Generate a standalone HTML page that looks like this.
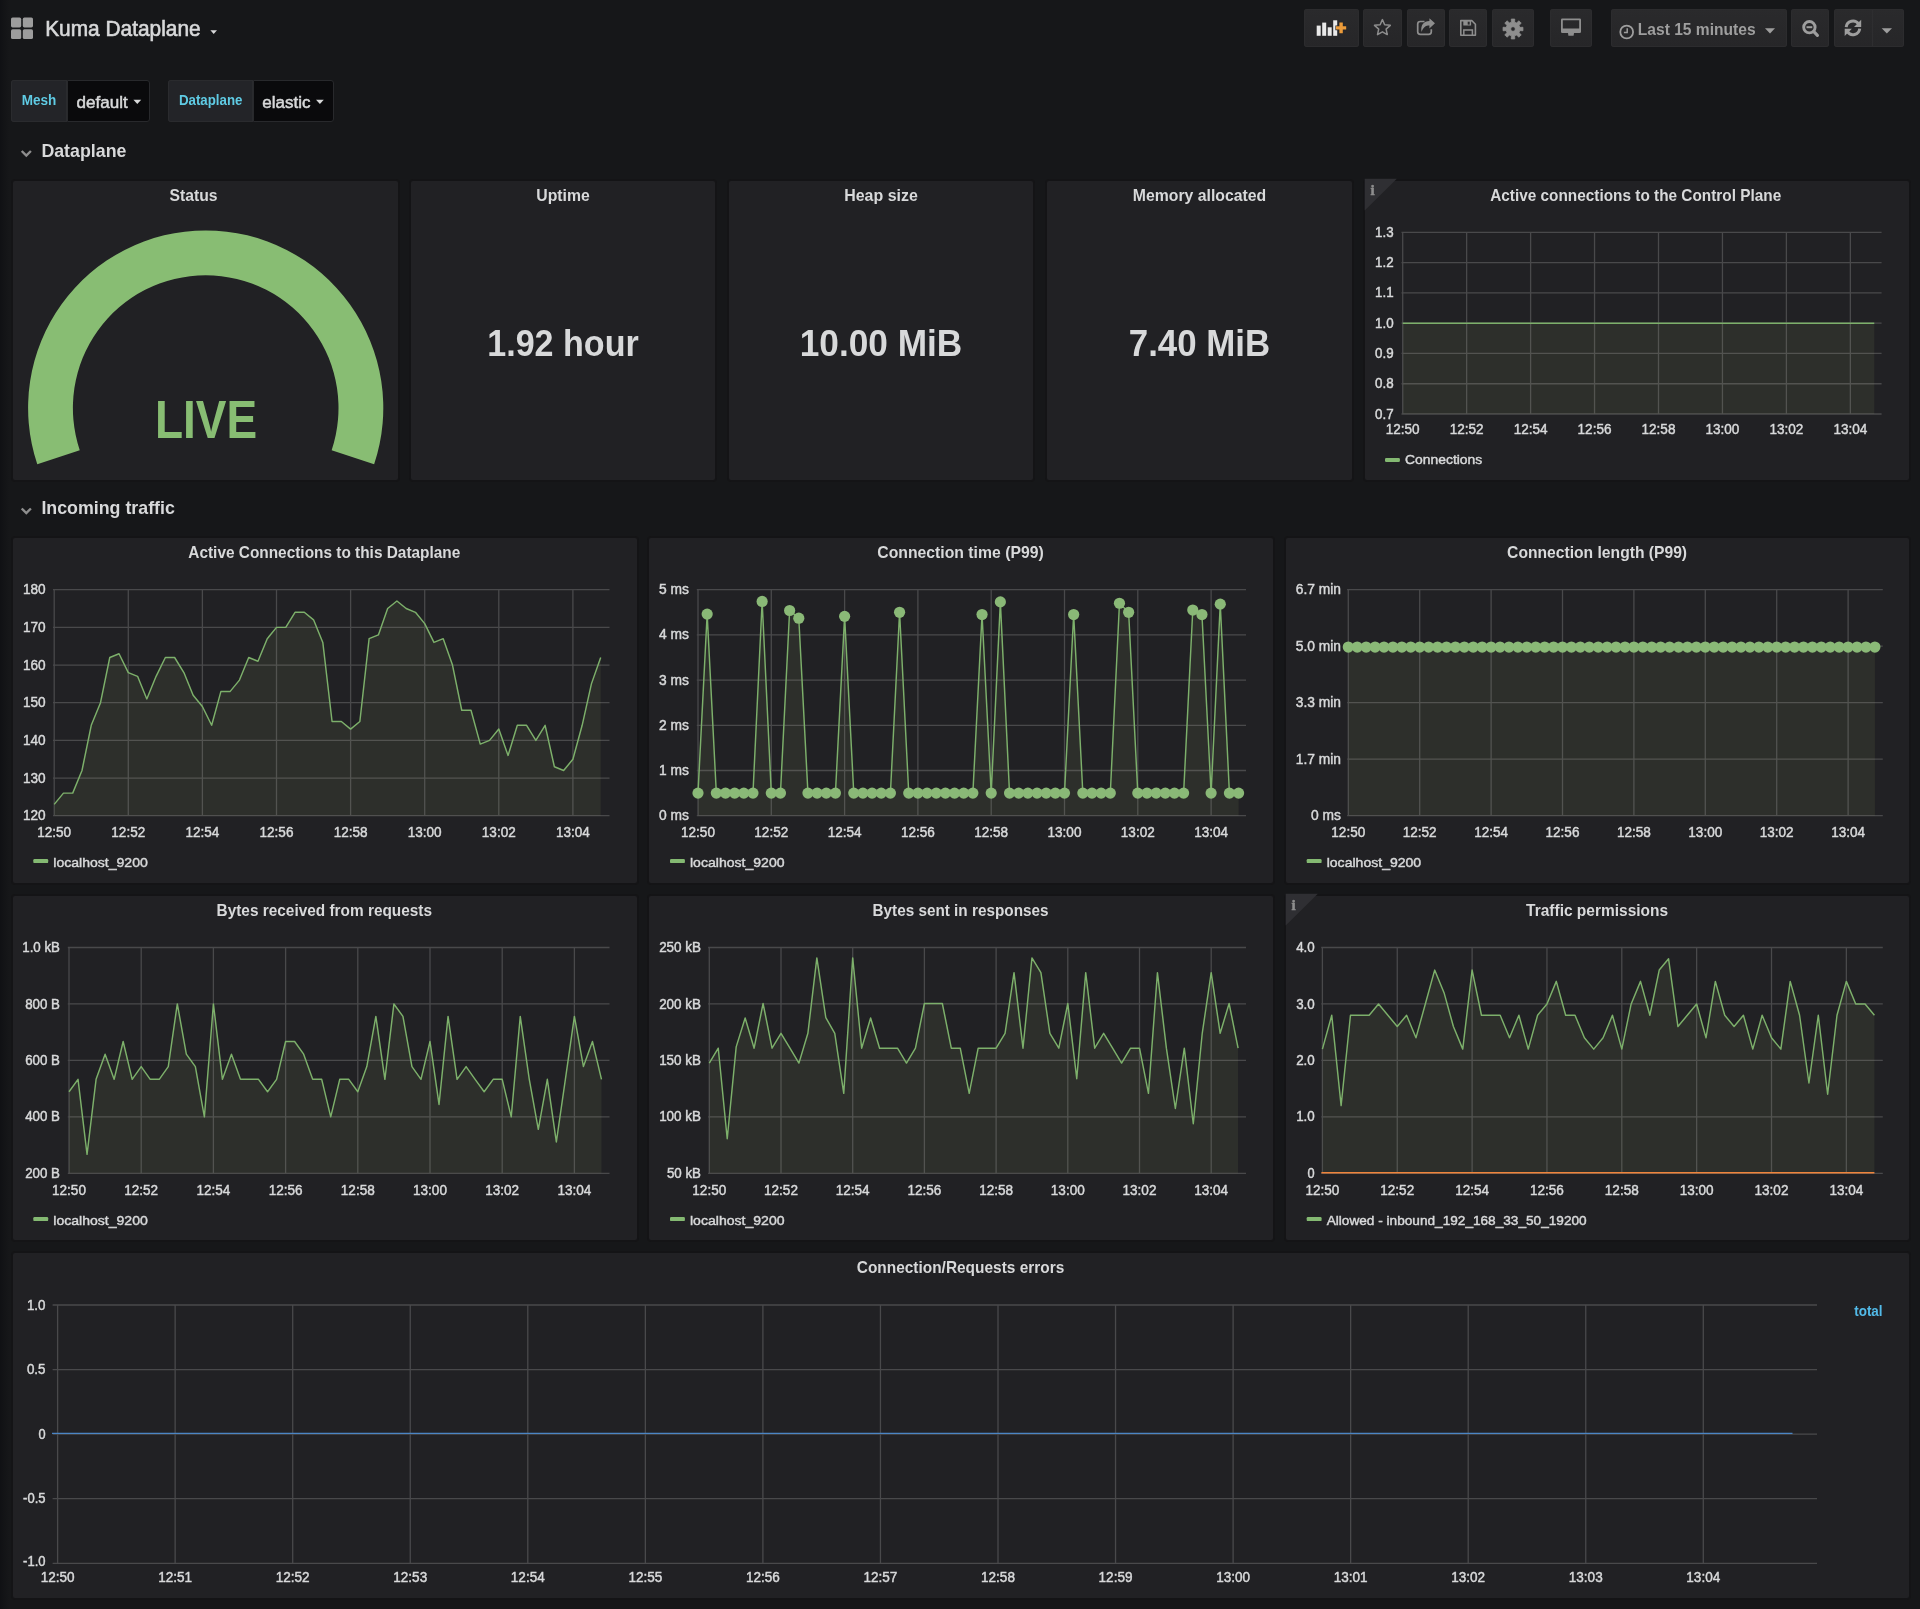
<!DOCTYPE html>
<html lang="en"><head><meta charset="utf-8"><title>Kuma Dataplane - Grafana</title>
<style>
html,body{margin:0;padding:0;background:#161719;}
body{width:1920px;height:1609px;position:relative;overflow:hidden;font-family:"Liberation Sans",sans-serif;color:#d8d9da;}
svg{display:block;will-change:transform;font-family:"Liberation Sans",sans-serif;}
svg{fill:#d8d9da;}
.abs{position:absolute;}
.panel{position:absolute;background:#212124;box-shadow:0 0 0 2px #141416;border-radius:2px;overflow:hidden;}
.btn{position:absolute;top:9px;height:38px;border-radius:3px;background:linear-gradient(#2a2a2c,#262628);box-shadow:inset 0 0 0 1px #2c2c2e;}
.var{position:absolute;top:80px;height:42px;box-sizing:border-box;}
.var.l{background:#232428;border-radius:3px 0 0 3px;box-shadow:inset 0 0 0 1px #2a2b2e;}
.var.v{background:#0a0a0c;border:1px solid #28292c;border-radius:0 3px 3px 0;}
#overlay{position:absolute;left:0;top:0;}
.edge{position:absolute;left:0;top:0;width:9px;height:1609px;background:linear-gradient(90deg,#101114,#161719);}
</style></head><body>
<div class="edge"></div>
<div class="navbar"><div class="btn" style="left:1303.5px;width:55px"></div><div class="btn" style="left:1363px;width:39.3px"></div><div class="btn" style="left:1407px;width:37.7px"></div><div class="btn" style="left:1449.3px;width:37.7px"></div><div class="btn" style="left:1492px;width:42.2px"></div><div class="btn" style="left:1550px;width:42px"></div><div class="btn" style="left:1611.2px;width:175.5px"></div><div class="btn" style="left:1791.3px;width:37.6px"></div><div class="btn" style="left:1834px;width:70.2px"></div></div>
<div class="var l" style="left:11.3px;width:55.5px"></div><div class="var v" style="left:66.5px;width:83px"></div><div class="var l" style="left:168.3px;width:85px"></div><div class="var v" style="left:253px;width:80.5px"></div>
<svg id="overlay" width="1920" height="540" viewBox="0 0 1920 540"><rect x="11" y="17.6" width="10.2" height="9.8" rx="1.6" fill="#9d9d9d"/><rect x="22.8" y="17.6" width="10.2" height="9.8" rx="1.6" fill="#9d9d9d"/><rect x="11" y="29.2" width="10.2" height="9.8" rx="1.6" fill="#9d9d9d"/><rect x="22.8" y="29.2" width="10.2" height="9.8" rx="1.6" fill="#9d9d9d"/><text x="45.20" y="35.60" font-size="21.2" textLength="155.50" lengthAdjust="spacingAndGlyphs" stroke="#d8d9da" stroke-width="0.6">Kuma Dataplane</text><path d="M210.4 30.2h6.6l-3.3 3.7z" fill="#d8d9da"/><g fill="#e9e9e9"><rect x="1316.7" y="25.6" width="4" height="10.2"/><rect x="1322.2" y="22.6" width="4" height="13.2"/><rect x="1327.7" y="27.3" width="4" height="8.5"/><rect x="1333.2" y="20.3" width="4" height="15.5"/></g><path d="M1336 26.2h3.4v-3.6h3.4v3.6h3.4v3.4h-3.4v3.6h-3.4v-3.6h-3.4z" fill="#eb9b3a" stroke="#262628" stroke-width="1.2" paint-order="stroke"/><path d="M1382.40 19.60L1384.69 24.74L1390.29 25.34L1386.11 29.11L1387.28 34.61L1382.40 31.80L1377.52 34.61L1378.69 29.11L1374.51 25.34L1380.11 24.74z" fill="none" stroke="#8e8e8e" stroke-width="1.5" stroke-linejoin="round"/><path d="M1424.5 21.5h-4.2a2.6 2.6 0 0 0 -2.6 2.6v7.6a2.6 2.6 0 0 0 2.6 2.6h8.4a2.6 2.6 0 0 0 2.6 -2.6v-2.4" fill="none" stroke="#8e8e8e" stroke-width="1.7"/><path d="M1429.4 18.2L1435 23.3L1429.4 28.4V25.500C1425.600 25.500 1423.300 27.400 1421.500 32C1420.300 25.400 1423.600 21.300 1429.400 21.100Z" fill="#8e8e8e" stroke="#262628" stroke-width="1" paint-order="stroke"/><path d="M1460.8 20.6h11l3.600 3.600v11h-14.600z" fill="none" stroke="#8e8e8e" stroke-width="1.6" stroke-linejoin="round"/><path d="M1463.300 20.600h7.800v4.900h-7.800z" fill="#8e8e8e"/><path d="M1467.700 21.700h2v2.900h-2z" fill="#29292b"/><path d="M1463.800 35v-5h8.600v5" fill="none" stroke="#8e8e8e" stroke-width="1.500"/><path d="M1522.95 27.26L1522.95 30.74L1519.81 30.63L1518.97 32.66L1521.26 34.81L1518.81 37.26L1516.66 34.97L1514.63 35.81L1514.74 38.95L1511.26 38.95L1511.37 35.81L1509.34 34.97L1507.19 37.26L1504.74 34.81L1507.03 32.66L1506.19 30.63L1503.05 30.74L1503.05 27.26L1506.19 27.37L1507.03 25.34L1504.74 23.19L1507.19 20.74L1509.34 23.03L1511.37 22.19L1511.26 19.05L1514.74 19.05L1514.63 22.19L1516.66 23.03L1518.81 20.74L1521.26 23.19L1518.97 25.34L1519.81 27.37zM1515.3 29a2.3 2.3 0 1 0 -4.6 0a2.3 2.3 0 1 0 4.6 0z" fill="#8e8e8e" fill-rule="evenodd" stroke="#8e8e8e" stroke-width="0.8" stroke-linejoin="round"/><path d="M1562.3 18.400h17.400a1.300 1.300 0 0 1 1.300 1.300v12.100a1.300 1.300 0 0 1 -1.300 1.300h-17.400a1.300 1.300 0 0 1 -1.300 -1.300v-12.100a1.300 1.300 0 0 1 1.300 -1.300zM1562.800 20.300v8.200h16.400v-8.200z" fill="#8e8e8e" fill-rule="evenodd"/><path d="M1568 33h6l-.4 2.700h-5.200z" fill="#8e8e8e"/><circle cx="1626.700" cy="32" r="6.400" fill="none" stroke="#9e9e9e" stroke-width="1.800"/><path d="M1627.200 28.200v4.300h-3.300" fill="none" stroke="#9e9e9e" stroke-width="1.500"/><text x="1637.80" y="34.60" font-size="16" textLength="117.80" lengthAdjust="spacingAndGlyphs" fill="#9e9e9e" font-weight="700">Last 15 minutes</text><path d="M1765 28.200h10l-5 5.300z" fill="#9e9e9e"/><circle cx="1809.400" cy="27.200" r="5.700" fill="none" stroke="#9e9e9e" stroke-width="2.900"/><path d="M1813.800 31.700l3.600 3.600" stroke="#9e9e9e" stroke-width="3.200" stroke-linecap="round"/><path d="M1806.500 27.200h5.800" stroke="#9e9e9e" stroke-width="2"/><path d="M1846.200 27.050A6.750 6.750 0 0 1 1858.500 24" fill="none" stroke="#9e9e9e" stroke-width="3"/><path d="M1861.200 19.700v7.200h-7.200z" fill="#9e9e9e"/><path d="M1859.700 28.650A6.750 6.750 0 0 1 1847.400 31.700" fill="none" stroke="#9e9e9e" stroke-width="3"/><path d="M1844.700 36v-7.200h7.200z" fill="#9e9e9e"/><path d="M1872.500 10v36" stroke="#2e2e30" stroke-width="1"/><path d="M1881.700 28.200h10.300l-5.150 5.300z" fill="#9e9e9e"/><text x="21.80" y="104.70" font-size="13.8" textLength="34.60" lengthAdjust="spacingAndGlyphs" fill="#5fcbe4" font-weight="700">Mesh</text><text x="76.60" y="108.00" font-size="16.3" textLength="51.20" lengthAdjust="spacingAndGlyphs" stroke="#d8d9da" stroke-width="0.5">default</text><path d="M133.400 99.700h7.800l-3.900 4.400z" fill="#d8d9da"/><text x="178.90" y="104.70" font-size="13.8" textLength="63.60" lengthAdjust="spacingAndGlyphs" fill="#5fcbe4" font-weight="700">Dataplane</text><text x="262.30" y="108.00" font-size="16.3" textLength="48.20" lengthAdjust="spacingAndGlyphs" stroke="#d8d9da" stroke-width="0.5">elastic</text><path d="M316 99.700h7.800l-3.900 4.400z" fill="#d8d9da"/><path d="M21.700 151.0l4.600 4.600l4.600 -4.600" fill="none" stroke="#8e8e8e" stroke-width="2.400"/><text x="41.40" y="156.80" font-size="18.4" textLength="85.00" lengthAdjust="spacingAndGlyphs" font-weight="700">Dataplane</text><path d="M21.700 508.49999999999994l4.600 4.600l4.600 -4.600" fill="none" stroke="#8e8e8e" stroke-width="2.400"/><text x="41.40" y="514.30" font-size="18.4" textLength="133.50" lengthAdjust="spacingAndGlyphs" font-weight="700">Incoming traffic</text></svg>
<div class="panel" style="left:13px;top:181px;width:385px;height:299px"><svg width="385" height="299" viewBox="13 181 385 299"><text x="193.50" y="201.00" font-size="15.9" text-anchor="middle" textLength="48.00" lengthAdjust="spacingAndGlyphs" font-weight="700">Status</text><path d="M37.28 464.35A177.6 177.6 0 1 1 374.12 464.35L331.64 450.14A132.8 132.8 0 1 0 79.76 450.14z" fill="#88bd73"/><text x="206.00" y="438.00" font-size="53.5" text-anchor="middle" textLength="102.20" lengthAdjust="spacingAndGlyphs" fill="#88bd73" font-weight="700">LIVE</text></svg></div>
<div class="panel" style="left:411px;top:181px;width:304px;height:299px"><svg width="304" height="299" viewBox="411 181 304 299"><text x="563.00" y="200.70" font-size="15.9" text-anchor="middle" textLength="53.50" lengthAdjust="spacingAndGlyphs" font-weight="700">Uptime</text><text x="563.00" y="355.50" font-size="37.6" text-anchor="middle" textLength="151.50" lengthAdjust="spacingAndGlyphs" font-weight="700">1.92 hour</text></svg></div>
<div class="panel" style="left:729px;top:181px;width:304px;height:299px"><svg width="304" height="299" viewBox="729 181 304 299"><text x="881.00" y="200.70" font-size="15.9" text-anchor="middle" textLength="73.50" lengthAdjust="spacingAndGlyphs" font-weight="700">Heap size</text><text x="881.00" y="355.50" font-size="37.6" text-anchor="middle" textLength="162.50" lengthAdjust="spacingAndGlyphs" font-weight="700">10.00 MiB</text></svg></div>
<div class="panel" style="left:1047px;top:181px;width:305px;height:299px"><svg width="305" height="299" viewBox="1047 181 305 299"><text x="1199.50" y="200.70" font-size="15.9" text-anchor="middle" textLength="133.50" lengthAdjust="spacingAndGlyphs" font-weight="700">Memory allocated</text><text x="1199.50" y="355.50" font-size="37.6" text-anchor="middle" textLength="141.50" lengthAdjust="spacingAndGlyphs" font-weight="700">7.40 MiB</text></svg></div>
<div class="panel" style="left:1365px;top:181px;width:544px;height:299px"><svg width="544" height="299" viewBox="1365 181 544 299"><text x="1635.70" y="200.70" font-size="15.9" text-anchor="middle" textLength="291.00" lengthAdjust="spacingAndGlyphs" font-weight="700">Active connections to the Control Plane</text><path d="M1402.70 323.20 L1410.69 323.20 L1418.68 323.20 L1426.68 323.20 L1434.67 323.20 L1442.66 323.20 L1450.65 323.20 L1458.65 323.20 L1466.64 323.20 L1474.63 323.20 L1482.62 323.20 L1490.62 323.20 L1498.61 323.20 L1506.60 323.20 L1514.60 323.20 L1522.59 323.20 L1530.58 323.20 L1538.57 323.20 L1546.57 323.20 L1554.56 323.20 L1562.55 323.20 L1570.54 323.20 L1578.54 323.20 L1586.53 323.20 L1594.52 323.20 L1602.51 323.20 L1610.51 323.20 L1618.50 323.20 L1626.49 323.20 L1634.48 323.20 L1642.47 323.20 L1650.47 323.20 L1658.46 323.20 L1666.45 323.20 L1674.45 323.20 L1682.44 323.20 L1690.43 323.20 L1698.42 323.20 L1706.41 323.20 L1714.41 323.20 L1722.40 323.20 L1730.39 323.20 L1738.38 323.20 L1746.38 323.20 L1754.37 323.20 L1762.36 323.20 L1770.36 323.20 L1778.35 323.20 L1786.34 323.20 L1794.33 323.20 L1802.33 323.20 L1810.32 323.20 L1818.31 323.20 L1826.30 323.20 L1834.30 323.20 L1842.29 323.20 L1850.28 323.20 L1858.27 323.20 L1866.27 323.20 L1874.26 323.20 L1874.26 414.00 L1402.70 414.00z" fill="#99ad6a" fill-opacity="0.1"/><path d="M1401.50 232.40H1881.60M1401.50 262.67H1881.60M1401.50 292.93H1881.60M1401.50 323.20H1881.60M1401.50 353.47H1881.60M1401.50 383.73H1881.60M1401.50 414.00H1881.60M1402.70 231.90V414.50M1466.65 231.90V414.50M1530.60 231.90V414.50M1594.55 231.90V414.50M1658.50 231.90V414.50M1722.45 231.90V414.50M1786.40 231.90V414.50M1850.35 231.90V414.50" stroke="#c8c8c8" stroke-opacity="0.24" stroke-width="1.3" fill="none"/><path d="M1402.70 323.20 L1410.69 323.20 L1418.68 323.20 L1426.68 323.20 L1434.67 323.20 L1442.66 323.20 L1450.65 323.20 L1458.65 323.20 L1466.64 323.20 L1474.63 323.20 L1482.62 323.20 L1490.62 323.20 L1498.61 323.20 L1506.60 323.20 L1514.60 323.20 L1522.59 323.20 L1530.58 323.20 L1538.57 323.20 L1546.57 323.20 L1554.56 323.20 L1562.55 323.20 L1570.54 323.20 L1578.54 323.20 L1586.53 323.20 L1594.52 323.20 L1602.51 323.20 L1610.51 323.20 L1618.50 323.20 L1626.49 323.20 L1634.48 323.20 L1642.47 323.20 L1650.47 323.20 L1658.46 323.20 L1666.45 323.20 L1674.45 323.20 L1682.44 323.20 L1690.43 323.20 L1698.42 323.20 L1706.41 323.20 L1714.41 323.20 L1722.40 323.20 L1730.39 323.20 L1738.38 323.20 L1746.38 323.20 L1754.37 323.20 L1762.36 323.20 L1770.36 323.20 L1778.35 323.20 L1786.34 323.20 L1794.33 323.20 L1802.33 323.20 L1810.32 323.20 L1818.31 323.20 L1826.30 323.20 L1834.30 323.20 L1842.29 323.20 L1850.28 323.20 L1858.27 323.20 L1866.27 323.20 L1874.26 323.20" stroke="#7db06b" stroke-width="1.45" fill="none" stroke-linejoin="round"/><text x="1393.60" y="236.95" font-size="13.8" text-anchor="end" textLength="18.57" lengthAdjust="spacingAndGlyphs" stroke="#d8d9da" stroke-width="0.45">1.3</text><text x="1393.60" y="267.22" font-size="13.8" text-anchor="end" textLength="18.57" lengthAdjust="spacingAndGlyphs" stroke="#d8d9da" stroke-width="0.45">1.2</text><text x="1393.60" y="297.48" font-size="13.8" text-anchor="end" textLength="18.57" lengthAdjust="spacingAndGlyphs" stroke="#d8d9da" stroke-width="0.45">1.1</text><text x="1393.60" y="327.75" font-size="13.8" text-anchor="end" textLength="18.57" lengthAdjust="spacingAndGlyphs" stroke="#d8d9da" stroke-width="0.45">1.0</text><text x="1393.60" y="358.02" font-size="13.8" text-anchor="end" textLength="18.57" lengthAdjust="spacingAndGlyphs" stroke="#d8d9da" stroke-width="0.45">0.9</text><text x="1393.60" y="388.28" font-size="13.8" text-anchor="end" textLength="18.57" lengthAdjust="spacingAndGlyphs" stroke="#d8d9da" stroke-width="0.45">0.8</text><text x="1393.60" y="418.55" font-size="13.8" text-anchor="end" textLength="18.57" lengthAdjust="spacingAndGlyphs" stroke="#d8d9da" stroke-width="0.45">0.7</text><text x="1402.70" y="433.85" font-size="13.8" text-anchor="middle" textLength="33.89" lengthAdjust="spacingAndGlyphs" stroke="#d8d9da" stroke-width="0.45">12:50</text><text x="1466.65" y="433.85" font-size="13.8" text-anchor="middle" textLength="33.89" lengthAdjust="spacingAndGlyphs" stroke="#d8d9da" stroke-width="0.45">12:52</text><text x="1530.60" y="433.85" font-size="13.8" text-anchor="middle" textLength="33.89" lengthAdjust="spacingAndGlyphs" stroke="#d8d9da" stroke-width="0.45">12:54</text><text x="1594.55" y="433.85" font-size="13.8" text-anchor="middle" textLength="33.89" lengthAdjust="spacingAndGlyphs" stroke="#d8d9da" stroke-width="0.45">12:56</text><text x="1658.50" y="433.85" font-size="13.8" text-anchor="middle" textLength="33.89" lengthAdjust="spacingAndGlyphs" stroke="#d8d9da" stroke-width="0.45">12:58</text><text x="1722.45" y="433.85" font-size="13.8" text-anchor="middle" textLength="33.89" lengthAdjust="spacingAndGlyphs" stroke="#d8d9da" stroke-width="0.45">13:00</text><text x="1786.40" y="433.85" font-size="13.8" text-anchor="middle" textLength="33.89" lengthAdjust="spacingAndGlyphs" stroke="#d8d9da" stroke-width="0.45">13:02</text><text x="1850.35" y="433.85" font-size="13.8" text-anchor="middle" textLength="33.89" lengthAdjust="spacingAndGlyphs" stroke="#d8d9da" stroke-width="0.45">13:04</text><rect x="1385.00" y="458.00" width="14.9" height="4" rx="1.2" fill="#84b972"/><text x="1405.00" y="463.60" font-size="13.6" textLength="77.30" lengthAdjust="spacingAndGlyphs" stroke="#d8d9da" stroke-width="0.45">Connections</text></svg></div>
<div class="panel" style="left:13px;top:538px;width:624px;height:345px"><svg width="624" height="345" viewBox="13 538 624 345"><text x="324.30" y="557.80" font-size="15.9" text-anchor="middle" textLength="272.00" lengthAdjust="spacingAndGlyphs" font-weight="700">Active Connections to this Dataplane</text><path d="M54.20 804.40 L63.46 793.10 L72.72 793.10 L81.99 770.50 L91.25 725.30 L100.51 702.70 L109.78 657.50 L119.04 653.73 L128.30 672.57 L137.56 676.33 L146.82 698.93 L156.09 676.33 L165.35 657.50 L174.61 657.50 L183.88 672.57 L193.14 695.17 L202.40 706.47 L211.66 725.30 L220.93 691.40 L230.19 691.40 L239.45 680.10 L248.71 657.50 L257.97 661.27 L267.24 638.67 L276.50 627.37 L285.76 627.37 L295.02 612.30 L304.29 612.30 L313.55 619.83 L322.81 642.43 L332.07 721.53 L341.34 721.53 L350.60 729.07 L359.86 721.53 L369.12 638.67 L378.39 634.90 L387.65 608.53 L396.91 601.00 L406.17 608.53 L415.44 612.30 L424.70 623.60 L433.96 642.43 L443.22 638.67 L452.49 665.03 L461.75 710.23 L471.01 710.23 L480.27 744.13 L489.54 740.37 L498.80 729.07 L508.06 755.43 L517.32 725.30 L526.59 725.30 L535.85 740.37 L545.11 725.30 L554.38 766.73 L563.64 770.50 L572.90 759.20 L582.16 725.30 L591.42 683.87 L600.69 657.50 L600.69 815.70 L54.20 815.70z" fill="#99ad6a" fill-opacity="0.1"/><path d="M53.00 589.70H609.50M53.00 627.37H609.50M53.00 665.03H609.50M53.00 702.70H609.50M53.00 740.37H609.50M53.00 778.03H609.50M53.00 815.70H609.50M54.20 589.20V816.20M128.30 589.20V816.20M202.40 589.20V816.20M276.50 589.20V816.20M350.60 589.20V816.20M424.70 589.20V816.20M498.80 589.20V816.20M572.90 589.20V816.20" stroke="#c8c8c8" stroke-opacity="0.24" stroke-width="1.3" fill="none"/><path d="M54.20 804.40 L63.46 793.10 L72.72 793.10 L81.99 770.50 L91.25 725.30 L100.51 702.70 L109.78 657.50 L119.04 653.73 L128.30 672.57 L137.56 676.33 L146.82 698.93 L156.09 676.33 L165.35 657.50 L174.61 657.50 L183.88 672.57 L193.14 695.17 L202.40 706.47 L211.66 725.30 L220.93 691.40 L230.19 691.40 L239.45 680.10 L248.71 657.50 L257.97 661.27 L267.24 638.67 L276.50 627.37 L285.76 627.37 L295.02 612.30 L304.29 612.30 L313.55 619.83 L322.81 642.43 L332.07 721.53 L341.34 721.53 L350.60 729.07 L359.86 721.53 L369.12 638.67 L378.39 634.90 L387.65 608.53 L396.91 601.00 L406.17 608.53 L415.44 612.30 L424.70 623.60 L433.96 642.43 L443.22 638.67 L452.49 665.03 L461.75 710.23 L471.01 710.23 L480.27 744.13 L489.54 740.37 L498.80 729.07 L508.06 755.43 L517.32 725.30 L526.59 725.30 L535.85 740.37 L545.11 725.30 L554.38 766.73 L563.64 770.50 L572.90 759.20 L582.16 725.30 L591.42 683.87 L600.69 657.50" stroke="#7db06b" stroke-width="1.45" fill="none" stroke-linejoin="round"/><text x="45.70" y="594.25" font-size="13.8" text-anchor="end" textLength="22.72" lengthAdjust="spacingAndGlyphs" stroke="#d8d9da" stroke-width="0.45">180</text><text x="45.70" y="631.92" font-size="13.8" text-anchor="end" textLength="22.72" lengthAdjust="spacingAndGlyphs" stroke="#d8d9da" stroke-width="0.45">170</text><text x="45.70" y="669.58" font-size="13.8" text-anchor="end" textLength="22.72" lengthAdjust="spacingAndGlyphs" stroke="#d8d9da" stroke-width="0.45">160</text><text x="45.70" y="707.25" font-size="13.8" text-anchor="end" textLength="22.72" lengthAdjust="spacingAndGlyphs" stroke="#d8d9da" stroke-width="0.45">150</text><text x="45.70" y="744.92" font-size="13.8" text-anchor="end" textLength="22.72" lengthAdjust="spacingAndGlyphs" stroke="#d8d9da" stroke-width="0.45">140</text><text x="45.70" y="782.58" font-size="13.8" text-anchor="end" textLength="22.72" lengthAdjust="spacingAndGlyphs" stroke="#d8d9da" stroke-width="0.45">130</text><text x="45.70" y="820.25" font-size="13.8" text-anchor="end" textLength="22.72" lengthAdjust="spacingAndGlyphs" stroke="#d8d9da" stroke-width="0.45">120</text><text x="54.20" y="836.55" font-size="13.8" text-anchor="middle" textLength="33.89" lengthAdjust="spacingAndGlyphs" stroke="#d8d9da" stroke-width="0.45">12:50</text><text x="128.30" y="836.55" font-size="13.8" text-anchor="middle" textLength="33.89" lengthAdjust="spacingAndGlyphs" stroke="#d8d9da" stroke-width="0.45">12:52</text><text x="202.40" y="836.55" font-size="13.8" text-anchor="middle" textLength="33.89" lengthAdjust="spacingAndGlyphs" stroke="#d8d9da" stroke-width="0.45">12:54</text><text x="276.50" y="836.55" font-size="13.8" text-anchor="middle" textLength="33.89" lengthAdjust="spacingAndGlyphs" stroke="#d8d9da" stroke-width="0.45">12:56</text><text x="350.60" y="836.55" font-size="13.8" text-anchor="middle" textLength="33.89" lengthAdjust="spacingAndGlyphs" stroke="#d8d9da" stroke-width="0.45">12:58</text><text x="424.70" y="836.55" font-size="13.8" text-anchor="middle" textLength="33.89" lengthAdjust="spacingAndGlyphs" stroke="#d8d9da" stroke-width="0.45">13:00</text><text x="498.80" y="836.55" font-size="13.8" text-anchor="middle" textLength="33.89" lengthAdjust="spacingAndGlyphs" stroke="#d8d9da" stroke-width="0.45">13:02</text><text x="572.90" y="836.55" font-size="13.8" text-anchor="middle" textLength="33.89" lengthAdjust="spacingAndGlyphs" stroke="#d8d9da" stroke-width="0.45">13:04</text><rect x="33.30" y="859.10" width="14.9" height="4" rx="1.2" fill="#84b972"/><text x="53.30" y="866.60" font-size="13.6" textLength="94.50" lengthAdjust="spacingAndGlyphs" stroke="#d8d9da" stroke-width="0.45">localhost_9200</text></svg></div>
<div class="panel" style="left:649px;top:538px;width:624px;height:345px"><svg width="624" height="345" viewBox="649 538 624 345"><text x="960.50" y="557.80" font-size="15.9" text-anchor="middle" textLength="166.50" lengthAdjust="spacingAndGlyphs" font-weight="700">Connection time (P99)</text><path d="M698.00 793.10 L707.16 614.11 L716.33 793.10 L725.49 793.10 L734.65 793.10 L743.81 793.10 L752.98 793.10 L762.14 601.45 L771.30 793.10 L780.46 793.10 L789.62 610.49 L798.79 618.18 L807.95 793.10 L817.11 793.10 L826.27 793.10 L835.44 793.10 L844.60 616.37 L853.76 793.10 L862.92 793.10 L872.09 793.10 L881.25 793.10 L890.41 793.10 L899.58 612.30 L908.74 793.10 L917.90 793.10 L927.06 793.10 L936.23 793.10 L945.39 793.10 L954.55 793.10 L963.71 793.10 L972.88 793.10 L982.04 614.56 L991.20 793.10 L1000.36 601.90 L1009.52 793.10 L1018.69 793.10 L1027.85 793.10 L1037.01 793.10 L1046.17 793.10 L1055.34 793.10 L1064.50 793.10 L1073.66 614.56 L1082.83 793.10 L1091.99 793.10 L1101.15 793.10 L1110.31 793.10 L1119.47 603.26 L1128.64 612.30 L1137.80 793.10 L1146.96 793.10 L1156.12 793.10 L1165.29 793.10 L1174.45 793.10 L1183.61 793.10 L1192.78 610.04 L1201.94 614.56 L1211.10 793.10 L1220.26 604.16 L1229.42 793.10 L1238.59 793.10 L1238.59 815.70 L698.00 815.70z" fill="#99ad6a" fill-opacity="0.1"/><path d="M696.80 589.70H1246.00M696.80 634.90H1246.00M696.80 680.10H1246.00M696.80 725.30H1246.00M696.80 770.50H1246.00M696.80 815.70H1246.00M698.00 589.20V816.20M771.30 589.20V816.20M844.60 589.20V816.20M917.90 589.20V816.20M991.20 589.20V816.20M1064.50 589.20V816.20M1137.80 589.20V816.20M1211.10 589.20V816.20" stroke="#c8c8c8" stroke-opacity="0.24" stroke-width="1.3" fill="none"/><path d="M698.00 793.10 L707.16 614.11 L716.33 793.10 L725.49 793.10 L734.65 793.10 L743.81 793.10 L752.98 793.10 L762.14 601.45 L771.30 793.10 L780.46 793.10 L789.62 610.49 L798.79 618.18 L807.95 793.10 L817.11 793.10 L826.27 793.10 L835.44 793.10 L844.60 616.37 L853.76 793.10 L862.92 793.10 L872.09 793.10 L881.25 793.10 L890.41 793.10 L899.58 612.30 L908.74 793.10 L917.90 793.10 L927.06 793.10 L936.23 793.10 L945.39 793.10 L954.55 793.10 L963.71 793.10 L972.88 793.10 L982.04 614.56 L991.20 793.10 L1000.36 601.90 L1009.52 793.10 L1018.69 793.10 L1027.85 793.10 L1037.01 793.10 L1046.17 793.10 L1055.34 793.10 L1064.50 793.10 L1073.66 614.56 L1082.83 793.10 L1091.99 793.10 L1101.15 793.10 L1110.31 793.10 L1119.47 603.26 L1128.64 612.30 L1137.80 793.10 L1146.96 793.10 L1156.12 793.10 L1165.29 793.10 L1174.45 793.10 L1183.61 793.10 L1192.78 610.04 L1201.94 614.56 L1211.10 793.10 L1220.26 604.16 L1229.42 793.10 L1238.59 793.10" stroke="#7db06b" stroke-width="1.45" fill="none" stroke-linejoin="round"/><g fill="#8ab977"><circle cx="698.00" cy="793.10" r="5.6"/><circle cx="707.16" cy="614.11" r="5.6"/><circle cx="716.33" cy="793.10" r="5.6"/><circle cx="725.49" cy="793.10" r="5.6"/><circle cx="734.65" cy="793.10" r="5.6"/><circle cx="743.81" cy="793.10" r="5.6"/><circle cx="752.98" cy="793.10" r="5.6"/><circle cx="762.14" cy="601.45" r="5.6"/><circle cx="771.30" cy="793.10" r="5.6"/><circle cx="780.46" cy="793.10" r="5.6"/><circle cx="789.62" cy="610.49" r="5.6"/><circle cx="798.79" cy="618.18" r="5.6"/><circle cx="807.95" cy="793.10" r="5.6"/><circle cx="817.11" cy="793.10" r="5.6"/><circle cx="826.27" cy="793.10" r="5.6"/><circle cx="835.44" cy="793.10" r="5.6"/><circle cx="844.60" cy="616.37" r="5.6"/><circle cx="853.76" cy="793.10" r="5.6"/><circle cx="862.92" cy="793.10" r="5.6"/><circle cx="872.09" cy="793.10" r="5.6"/><circle cx="881.25" cy="793.10" r="5.6"/><circle cx="890.41" cy="793.10" r="5.6"/><circle cx="899.58" cy="612.30" r="5.6"/><circle cx="908.74" cy="793.10" r="5.6"/><circle cx="917.90" cy="793.10" r="5.6"/><circle cx="927.06" cy="793.10" r="5.6"/><circle cx="936.23" cy="793.10" r="5.6"/><circle cx="945.39" cy="793.10" r="5.6"/><circle cx="954.55" cy="793.10" r="5.6"/><circle cx="963.71" cy="793.10" r="5.6"/><circle cx="972.88" cy="793.10" r="5.6"/><circle cx="982.04" cy="614.56" r="5.6"/><circle cx="991.20" cy="793.10" r="5.6"/><circle cx="1000.36" cy="601.90" r="5.6"/><circle cx="1009.52" cy="793.10" r="5.6"/><circle cx="1018.69" cy="793.10" r="5.6"/><circle cx="1027.85" cy="793.10" r="5.6"/><circle cx="1037.01" cy="793.10" r="5.6"/><circle cx="1046.17" cy="793.10" r="5.6"/><circle cx="1055.34" cy="793.10" r="5.6"/><circle cx="1064.50" cy="793.10" r="5.6"/><circle cx="1073.66" cy="614.56" r="5.6"/><circle cx="1082.83" cy="793.10" r="5.6"/><circle cx="1091.99" cy="793.10" r="5.6"/><circle cx="1101.15" cy="793.10" r="5.6"/><circle cx="1110.31" cy="793.10" r="5.6"/><circle cx="1119.47" cy="603.26" r="5.6"/><circle cx="1128.64" cy="612.30" r="5.6"/><circle cx="1137.80" cy="793.10" r="5.6"/><circle cx="1146.96" cy="793.10" r="5.6"/><circle cx="1156.12" cy="793.10" r="5.6"/><circle cx="1165.29" cy="793.10" r="5.6"/><circle cx="1174.45" cy="793.10" r="5.6"/><circle cx="1183.61" cy="793.10" r="5.6"/><circle cx="1192.78" cy="610.04" r="5.6"/><circle cx="1201.94" cy="614.56" r="5.6"/><circle cx="1211.10" cy="793.10" r="5.6"/><circle cx="1220.26" cy="604.16" r="5.6"/><circle cx="1229.42" cy="793.10" r="5.6"/><circle cx="1238.59" cy="793.10" r="5.6"/></g><text x="689.00" y="594.25" font-size="13.8" text-anchor="end" textLength="29.90" lengthAdjust="spacingAndGlyphs" stroke="#d8d9da" stroke-width="0.45">5 ms</text><text x="689.00" y="639.45" font-size="13.8" text-anchor="end" textLength="29.90" lengthAdjust="spacingAndGlyphs" stroke="#d8d9da" stroke-width="0.45">4 ms</text><text x="689.00" y="684.65" font-size="13.8" text-anchor="end" textLength="29.90" lengthAdjust="spacingAndGlyphs" stroke="#d8d9da" stroke-width="0.45">3 ms</text><text x="689.00" y="729.85" font-size="13.8" text-anchor="end" textLength="29.90" lengthAdjust="spacingAndGlyphs" stroke="#d8d9da" stroke-width="0.45">2 ms</text><text x="689.00" y="775.05" font-size="13.8" text-anchor="end" textLength="29.90" lengthAdjust="spacingAndGlyphs" stroke="#d8d9da" stroke-width="0.45">1 ms</text><text x="689.00" y="820.25" font-size="13.8" text-anchor="end" textLength="29.90" lengthAdjust="spacingAndGlyphs" stroke="#d8d9da" stroke-width="0.45">0 ms</text><text x="698.00" y="836.55" font-size="13.8" text-anchor="middle" textLength="33.89" lengthAdjust="spacingAndGlyphs" stroke="#d8d9da" stroke-width="0.45">12:50</text><text x="771.30" y="836.55" font-size="13.8" text-anchor="middle" textLength="33.89" lengthAdjust="spacingAndGlyphs" stroke="#d8d9da" stroke-width="0.45">12:52</text><text x="844.60" y="836.55" font-size="13.8" text-anchor="middle" textLength="33.89" lengthAdjust="spacingAndGlyphs" stroke="#d8d9da" stroke-width="0.45">12:54</text><text x="917.90" y="836.55" font-size="13.8" text-anchor="middle" textLength="33.89" lengthAdjust="spacingAndGlyphs" stroke="#d8d9da" stroke-width="0.45">12:56</text><text x="991.20" y="836.55" font-size="13.8" text-anchor="middle" textLength="33.89" lengthAdjust="spacingAndGlyphs" stroke="#d8d9da" stroke-width="0.45">12:58</text><text x="1064.50" y="836.55" font-size="13.8" text-anchor="middle" textLength="33.89" lengthAdjust="spacingAndGlyphs" stroke="#d8d9da" stroke-width="0.45">13:00</text><text x="1137.80" y="836.55" font-size="13.8" text-anchor="middle" textLength="33.89" lengthAdjust="spacingAndGlyphs" stroke="#d8d9da" stroke-width="0.45">13:02</text><text x="1211.10" y="836.55" font-size="13.8" text-anchor="middle" textLength="33.89" lengthAdjust="spacingAndGlyphs" stroke="#d8d9da" stroke-width="0.45">13:04</text><rect x="670.00" y="859.10" width="14.9" height="4" rx="1.2" fill="#84b972"/><text x="690.00" y="866.60" font-size="13.6" textLength="94.50" lengthAdjust="spacingAndGlyphs" stroke="#d8d9da" stroke-width="0.45">localhost_9200</text></svg></div>
<div class="panel" style="left:1286px;top:538px;width:623px;height:345px"><svg width="623" height="345" viewBox="1286 538 623 345"><text x="1597.10" y="557.80" font-size="15.9" text-anchor="middle" textLength="180.00" lengthAdjust="spacingAndGlyphs" font-weight="700">Connection length (P99)</text><path d="M1348.30 647.05 L1357.22 647.05 L1366.15 647.05 L1375.08 647.05 L1384.00 647.05 L1392.92 647.05 L1401.85 647.05 L1410.77 647.05 L1419.70 647.05 L1428.62 647.05 L1437.55 647.05 L1446.47 647.05 L1455.40 647.05 L1464.33 647.05 L1473.25 647.05 L1482.17 647.05 L1491.10 647.05 L1500.03 647.05 L1508.95 647.05 L1517.88 647.05 L1526.80 647.05 L1535.72 647.05 L1544.65 647.05 L1553.58 647.05 L1562.50 647.05 L1571.42 647.05 L1580.35 647.05 L1589.28 647.05 L1598.20 647.05 L1607.12 647.05 L1616.05 647.05 L1624.97 647.05 L1633.90 647.05 L1642.83 647.05 L1651.75 647.05 L1660.67 647.05 L1669.60 647.05 L1678.53 647.05 L1687.45 647.05 L1696.38 647.05 L1705.30 647.05 L1714.22 647.05 L1723.15 647.05 L1732.08 647.05 L1741.00 647.05 L1749.92 647.05 L1758.85 647.05 L1767.78 647.05 L1776.70 647.05 L1785.62 647.05 L1794.55 647.05 L1803.47 647.05 L1812.40 647.05 L1821.33 647.05 L1830.25 647.05 L1839.17 647.05 L1848.10 647.05 L1857.03 647.05 L1865.95 647.05 L1874.88 647.05 L1874.88 815.70 L1348.30 815.70z" fill="#99ad6a" fill-opacity="0.1"/><path d="M1347.10 589.70H1882.80M1347.10 646.20H1882.80M1347.10 702.70H1882.80M1347.10 759.20H1882.80M1347.10 815.70H1882.80M1348.30 589.20V816.20M1419.70 589.20V816.20M1491.10 589.20V816.20M1562.50 589.20V816.20M1633.90 589.20V816.20M1705.30 589.20V816.20M1776.70 589.20V816.20M1848.10 589.20V816.20" stroke="#c8c8c8" stroke-opacity="0.24" stroke-width="1.3" fill="none"/><path d="M1348.30 647.05 L1357.22 647.05 L1366.15 647.05 L1375.08 647.05 L1384.00 647.05 L1392.92 647.05 L1401.85 647.05 L1410.77 647.05 L1419.70 647.05 L1428.62 647.05 L1437.55 647.05 L1446.47 647.05 L1455.40 647.05 L1464.33 647.05 L1473.25 647.05 L1482.17 647.05 L1491.10 647.05 L1500.03 647.05 L1508.95 647.05 L1517.88 647.05 L1526.80 647.05 L1535.72 647.05 L1544.65 647.05 L1553.58 647.05 L1562.50 647.05 L1571.42 647.05 L1580.35 647.05 L1589.28 647.05 L1598.20 647.05 L1607.12 647.05 L1616.05 647.05 L1624.97 647.05 L1633.90 647.05 L1642.83 647.05 L1651.75 647.05 L1660.67 647.05 L1669.60 647.05 L1678.53 647.05 L1687.45 647.05 L1696.38 647.05 L1705.30 647.05 L1714.22 647.05 L1723.15 647.05 L1732.08 647.05 L1741.00 647.05 L1749.92 647.05 L1758.85 647.05 L1767.78 647.05 L1776.70 647.05 L1785.62 647.05 L1794.55 647.05 L1803.47 647.05 L1812.40 647.05 L1821.33 647.05 L1830.25 647.05 L1839.17 647.05 L1848.10 647.05 L1857.03 647.05 L1865.95 647.05 L1874.88 647.05" stroke="#7db06b" stroke-width="1.45" fill="none" stroke-linejoin="round"/><g fill="#8ab977"><circle cx="1348.30" cy="647.05" r="5.6"/><circle cx="1357.22" cy="647.05" r="5.6"/><circle cx="1366.15" cy="647.05" r="5.6"/><circle cx="1375.08" cy="647.05" r="5.6"/><circle cx="1384.00" cy="647.05" r="5.6"/><circle cx="1392.92" cy="647.05" r="5.6"/><circle cx="1401.85" cy="647.05" r="5.6"/><circle cx="1410.77" cy="647.05" r="5.6"/><circle cx="1419.70" cy="647.05" r="5.6"/><circle cx="1428.62" cy="647.05" r="5.6"/><circle cx="1437.55" cy="647.05" r="5.6"/><circle cx="1446.47" cy="647.05" r="5.6"/><circle cx="1455.40" cy="647.05" r="5.6"/><circle cx="1464.33" cy="647.05" r="5.6"/><circle cx="1473.25" cy="647.05" r="5.6"/><circle cx="1482.17" cy="647.05" r="5.6"/><circle cx="1491.10" cy="647.05" r="5.6"/><circle cx="1500.03" cy="647.05" r="5.6"/><circle cx="1508.95" cy="647.05" r="5.6"/><circle cx="1517.88" cy="647.05" r="5.6"/><circle cx="1526.80" cy="647.05" r="5.6"/><circle cx="1535.72" cy="647.05" r="5.6"/><circle cx="1544.65" cy="647.05" r="5.6"/><circle cx="1553.58" cy="647.05" r="5.6"/><circle cx="1562.50" cy="647.05" r="5.6"/><circle cx="1571.42" cy="647.05" r="5.6"/><circle cx="1580.35" cy="647.05" r="5.6"/><circle cx="1589.28" cy="647.05" r="5.6"/><circle cx="1598.20" cy="647.05" r="5.6"/><circle cx="1607.12" cy="647.05" r="5.6"/><circle cx="1616.05" cy="647.05" r="5.6"/><circle cx="1624.97" cy="647.05" r="5.6"/><circle cx="1633.90" cy="647.05" r="5.6"/><circle cx="1642.83" cy="647.05" r="5.6"/><circle cx="1651.75" cy="647.05" r="5.6"/><circle cx="1660.67" cy="647.05" r="5.6"/><circle cx="1669.60" cy="647.05" r="5.6"/><circle cx="1678.53" cy="647.05" r="5.6"/><circle cx="1687.45" cy="647.05" r="5.6"/><circle cx="1696.38" cy="647.05" r="5.6"/><circle cx="1705.30" cy="647.05" r="5.6"/><circle cx="1714.22" cy="647.05" r="5.6"/><circle cx="1723.15" cy="647.05" r="5.6"/><circle cx="1732.08" cy="647.05" r="5.6"/><circle cx="1741.00" cy="647.05" r="5.6"/><circle cx="1749.92" cy="647.05" r="5.6"/><circle cx="1758.85" cy="647.05" r="5.6"/><circle cx="1767.78" cy="647.05" r="5.6"/><circle cx="1776.70" cy="647.05" r="5.6"/><circle cx="1785.62" cy="647.05" r="5.6"/><circle cx="1794.55" cy="647.05" r="5.6"/><circle cx="1803.47" cy="647.05" r="5.6"/><circle cx="1812.40" cy="647.05" r="5.6"/><circle cx="1821.33" cy="647.05" r="5.6"/><circle cx="1830.25" cy="647.05" r="5.6"/><circle cx="1839.17" cy="647.05" r="5.6"/><circle cx="1848.10" cy="647.05" r="5.6"/><circle cx="1857.03" cy="647.05" r="5.6"/><circle cx="1865.95" cy="647.05" r="5.6"/><circle cx="1874.88" cy="647.05" r="5.6"/></g><text x="1341.00" y="594.25" font-size="13.8" text-anchor="end" textLength="45.24" lengthAdjust="spacingAndGlyphs" stroke="#d8d9da" stroke-width="0.45">6.7 min</text><text x="1341.00" y="650.75" font-size="13.8" text-anchor="end" textLength="45.24" lengthAdjust="spacingAndGlyphs" stroke="#d8d9da" stroke-width="0.45">5.0 min</text><text x="1341.00" y="707.25" font-size="13.8" text-anchor="end" textLength="45.24" lengthAdjust="spacingAndGlyphs" stroke="#d8d9da" stroke-width="0.45">3.3 min</text><text x="1341.00" y="763.75" font-size="13.8" text-anchor="end" textLength="45.24" lengthAdjust="spacingAndGlyphs" stroke="#d8d9da" stroke-width="0.45">1.7 min</text><text x="1341.00" y="820.25" font-size="13.8" text-anchor="end" textLength="29.90" lengthAdjust="spacingAndGlyphs" stroke="#d8d9da" stroke-width="0.45">0 ms</text><text x="1348.30" y="836.55" font-size="13.8" text-anchor="middle" textLength="33.89" lengthAdjust="spacingAndGlyphs" stroke="#d8d9da" stroke-width="0.45">12:50</text><text x="1419.70" y="836.55" font-size="13.8" text-anchor="middle" textLength="33.89" lengthAdjust="spacingAndGlyphs" stroke="#d8d9da" stroke-width="0.45">12:52</text><text x="1491.10" y="836.55" font-size="13.8" text-anchor="middle" textLength="33.89" lengthAdjust="spacingAndGlyphs" stroke="#d8d9da" stroke-width="0.45">12:54</text><text x="1562.50" y="836.55" font-size="13.8" text-anchor="middle" textLength="33.89" lengthAdjust="spacingAndGlyphs" stroke="#d8d9da" stroke-width="0.45">12:56</text><text x="1633.90" y="836.55" font-size="13.8" text-anchor="middle" textLength="33.89" lengthAdjust="spacingAndGlyphs" stroke="#d8d9da" stroke-width="0.45">12:58</text><text x="1705.30" y="836.55" font-size="13.8" text-anchor="middle" textLength="33.89" lengthAdjust="spacingAndGlyphs" stroke="#d8d9da" stroke-width="0.45">13:00</text><text x="1776.70" y="836.55" font-size="13.8" text-anchor="middle" textLength="33.89" lengthAdjust="spacingAndGlyphs" stroke="#d8d9da" stroke-width="0.45">13:02</text><text x="1848.10" y="836.55" font-size="13.8" text-anchor="middle" textLength="33.89" lengthAdjust="spacingAndGlyphs" stroke="#d8d9da" stroke-width="0.45">13:04</text><rect x="1306.70" y="859.10" width="14.9" height="4" rx="1.2" fill="#84b972"/><text x="1326.70" y="866.60" font-size="13.6" textLength="94.50" lengthAdjust="spacingAndGlyphs" stroke="#d8d9da" stroke-width="0.45">localhost_9200</text></svg></div>
<div class="panel" style="left:13px;top:896px;width:624px;height:344px"><svg width="624" height="344" viewBox="13 896 624 344"><text x="324.30" y="915.80" font-size="15.9" text-anchor="middle" textLength="215.50" lengthAdjust="spacingAndGlyphs" font-weight="700">Bytes received from requests</text><path d="M69.00 1091.73 L78.03 1079.31 L87.05 1154.39 L96.08 1079.31 L105.10 1054.19 L114.12 1079.31 L123.15 1041.49 L132.18 1079.31 L141.20 1066.61 L150.23 1079.31 L159.25 1079.31 L168.28 1066.61 L177.30 1003.95 L186.32 1054.19 L195.35 1066.61 L204.38 1116.85 L213.40 1003.95 L222.43 1079.31 L231.45 1054.19 L240.47 1079.31 L249.50 1079.31 L258.52 1079.31 L267.55 1091.73 L276.58 1079.31 L285.60 1041.49 L294.62 1041.49 L303.65 1054.19 L312.68 1079.31 L321.70 1079.31 L330.73 1116.85 L339.75 1079.31 L348.78 1079.31 L357.80 1091.73 L366.82 1066.61 L375.85 1016.37 L384.88 1079.31 L393.90 1003.95 L402.93 1016.37 L411.95 1066.61 L420.98 1079.31 L430.00 1041.49 L439.03 1104.43 L448.05 1016.37 L457.07 1079.31 L466.10 1066.61 L475.12 1079.31 L484.15 1091.73 L493.18 1079.31 L502.20 1079.31 L511.23 1116.85 L520.25 1016.37 L529.28 1079.31 L538.30 1129.27 L547.33 1079.31 L556.35 1141.97 L565.38 1079.31 L574.40 1016.37 L583.43 1066.61 L592.45 1041.49 L601.48 1079.31 L601.48 1173.30 L69.00 1173.30z" fill="#99ad6a" fill-opacity="0.1"/><path d="M67.80 947.50H609.50M67.80 1003.95H609.50M67.80 1060.40H609.50M67.80 1116.85H609.50M67.80 1173.30H609.50M69.00 947.00V1173.80M141.20 947.00V1173.80M213.40 947.00V1173.80M285.60 947.00V1173.80M357.80 947.00V1173.80M430.00 947.00V1173.80M502.20 947.00V1173.80M574.40 947.00V1173.80" stroke="#c8c8c8" stroke-opacity="0.24" stroke-width="1.3" fill="none"/><path d="M69.00 1091.73 L78.03 1079.31 L87.05 1154.39 L96.08 1079.31 L105.10 1054.19 L114.12 1079.31 L123.15 1041.49 L132.18 1079.31 L141.20 1066.61 L150.23 1079.31 L159.25 1079.31 L168.28 1066.61 L177.30 1003.95 L186.32 1054.19 L195.35 1066.61 L204.38 1116.85 L213.40 1003.95 L222.43 1079.31 L231.45 1054.19 L240.47 1079.31 L249.50 1079.31 L258.52 1079.31 L267.55 1091.73 L276.58 1079.31 L285.60 1041.49 L294.62 1041.49 L303.65 1054.19 L312.68 1079.31 L321.70 1079.31 L330.73 1116.85 L339.75 1079.31 L348.78 1079.31 L357.80 1091.73 L366.82 1066.61 L375.85 1016.37 L384.88 1079.31 L393.90 1003.95 L402.93 1016.37 L411.95 1066.61 L420.98 1079.31 L430.00 1041.49 L439.03 1104.43 L448.05 1016.37 L457.07 1079.31 L466.10 1066.61 L475.12 1079.31 L484.15 1091.73 L493.18 1079.31 L502.20 1079.31 L511.23 1116.85 L520.25 1016.37 L529.28 1079.31 L538.30 1129.27 L547.33 1079.31 L556.35 1141.97 L565.38 1079.31 L574.40 1016.37 L583.43 1066.61 L592.45 1041.49 L601.48 1079.31" stroke="#7db06b" stroke-width="1.45" fill="none" stroke-linejoin="round"/><text x="60.00" y="952.05" font-size="13.8" text-anchor="end" textLength="37.71" lengthAdjust="spacingAndGlyphs" stroke="#d8d9da" stroke-width="0.45">1.0 kB</text><text x="60.00" y="1008.50" font-size="13.8" text-anchor="end" textLength="34.81" lengthAdjust="spacingAndGlyphs" stroke="#d8d9da" stroke-width="0.45">800 B</text><text x="60.00" y="1064.95" font-size="13.8" text-anchor="end" textLength="34.81" lengthAdjust="spacingAndGlyphs" stroke="#d8d9da" stroke-width="0.45">600 B</text><text x="60.00" y="1121.40" font-size="13.8" text-anchor="end" textLength="34.81" lengthAdjust="spacingAndGlyphs" stroke="#d8d9da" stroke-width="0.45">400 B</text><text x="60.00" y="1177.85" font-size="13.8" text-anchor="end" textLength="34.81" lengthAdjust="spacingAndGlyphs" stroke="#d8d9da" stroke-width="0.45">200 B</text><text x="69.00" y="1194.55" font-size="13.8" text-anchor="middle" textLength="33.89" lengthAdjust="spacingAndGlyphs" stroke="#d8d9da" stroke-width="0.45">12:50</text><text x="141.20" y="1194.55" font-size="13.8" text-anchor="middle" textLength="33.89" lengthAdjust="spacingAndGlyphs" stroke="#d8d9da" stroke-width="0.45">12:52</text><text x="213.40" y="1194.55" font-size="13.8" text-anchor="middle" textLength="33.89" lengthAdjust="spacingAndGlyphs" stroke="#d8d9da" stroke-width="0.45">12:54</text><text x="285.60" y="1194.55" font-size="13.8" text-anchor="middle" textLength="33.89" lengthAdjust="spacingAndGlyphs" stroke="#d8d9da" stroke-width="0.45">12:56</text><text x="357.80" y="1194.55" font-size="13.8" text-anchor="middle" textLength="33.89" lengthAdjust="spacingAndGlyphs" stroke="#d8d9da" stroke-width="0.45">12:58</text><text x="430.00" y="1194.55" font-size="13.8" text-anchor="middle" textLength="33.89" lengthAdjust="spacingAndGlyphs" stroke="#d8d9da" stroke-width="0.45">13:00</text><text x="502.20" y="1194.55" font-size="13.8" text-anchor="middle" textLength="33.89" lengthAdjust="spacingAndGlyphs" stroke="#d8d9da" stroke-width="0.45">13:02</text><text x="574.40" y="1194.55" font-size="13.8" text-anchor="middle" textLength="33.89" lengthAdjust="spacingAndGlyphs" stroke="#d8d9da" stroke-width="0.45">13:04</text><rect x="33.30" y="1217.10" width="14.9" height="4" rx="1.2" fill="#84b972"/><text x="53.30" y="1224.60" font-size="13.6" textLength="94.50" lengthAdjust="spacingAndGlyphs" stroke="#d8d9da" stroke-width="0.45">localhost_9200</text></svg></div>
<div class="panel" style="left:649px;top:896px;width:624px;height:344px"><svg width="624" height="344" viewBox="649 896 624 344"><text x="960.50" y="915.80" font-size="15.9" text-anchor="middle" textLength="176.00" lengthAdjust="spacingAndGlyphs" font-weight="700">Bytes sent in responses</text><path d="M709.30 1063.11 L718.26 1048.21 L727.22 1138.75 L736.19 1046.85 L745.15 1018.06 L754.11 1048.21 L763.07 1003.50 L772.04 1048.21 L781.00 1033.30 L789.96 1048.21 L798.92 1063.11 L807.89 1033.30 L816.85 957.89 L825.81 1017.61 L834.77 1033.30 L843.74 1093.37 L852.70 957.89 L861.66 1048.21 L870.62 1018.06 L879.59 1048.21 L888.55 1048.21 L897.51 1048.21 L906.47 1063.11 L915.44 1048.21 L924.40 1003.50 L933.36 1003.50 L942.32 1003.50 L951.29 1048.21 L960.25 1048.21 L969.21 1093.37 L978.17 1048.21 L987.14 1048.21 L996.10 1048.21 L1005.06 1033.30 L1014.02 972.68 L1022.99 1048.21 L1031.95 957.89 L1040.91 972.68 L1049.88 1033.30 L1058.84 1048.21 L1067.80 1003.50 L1076.76 1078.69 L1085.72 972.68 L1094.69 1048.21 L1103.65 1033.30 L1112.61 1048.21 L1121.58 1063.11 L1130.54 1048.21 L1139.50 1048.21 L1148.46 1093.37 L1157.42 972.68 L1166.39 1048.21 L1175.35 1108.50 L1184.31 1048.21 L1193.28 1123.74 L1202.24 1033.30 L1211.20 972.68 L1220.16 1033.30 L1229.12 1003.50 L1238.09 1048.21 L1238.09 1173.30 L709.30 1173.30z" fill="#99ad6a" fill-opacity="0.1"/><path d="M708.10 947.50H1246.00M708.10 1003.95H1246.00M708.10 1060.40H1246.00M708.10 1116.85H1246.00M708.10 1173.30H1246.00M709.30 947.00V1173.80M781.00 947.00V1173.80M852.70 947.00V1173.80M924.40 947.00V1173.80M996.10 947.00V1173.80M1067.80 947.00V1173.80M1139.50 947.00V1173.80M1211.20 947.00V1173.80" stroke="#c8c8c8" stroke-opacity="0.24" stroke-width="1.3" fill="none"/><path d="M709.30 1063.11 L718.26 1048.21 L727.22 1138.75 L736.19 1046.85 L745.15 1018.06 L754.11 1048.21 L763.07 1003.50 L772.04 1048.21 L781.00 1033.30 L789.96 1048.21 L798.92 1063.11 L807.89 1033.30 L816.85 957.89 L825.81 1017.61 L834.77 1033.30 L843.74 1093.37 L852.70 957.89 L861.66 1048.21 L870.62 1018.06 L879.59 1048.21 L888.55 1048.21 L897.51 1048.21 L906.47 1063.11 L915.44 1048.21 L924.40 1003.50 L933.36 1003.50 L942.32 1003.50 L951.29 1048.21 L960.25 1048.21 L969.21 1093.37 L978.17 1048.21 L987.14 1048.21 L996.10 1048.21 L1005.06 1033.30 L1014.02 972.68 L1022.99 1048.21 L1031.95 957.89 L1040.91 972.68 L1049.88 1033.30 L1058.84 1048.21 L1067.80 1003.50 L1076.76 1078.69 L1085.72 972.68 L1094.69 1048.21 L1103.65 1033.30 L1112.61 1048.21 L1121.58 1063.11 L1130.54 1048.21 L1139.50 1048.21 L1148.46 1093.37 L1157.42 972.68 L1166.39 1048.21 L1175.35 1108.50 L1184.31 1048.21 L1193.28 1123.74 L1202.24 1033.30 L1211.20 972.68 L1220.16 1033.30 L1229.12 1003.50 L1238.09 1048.21" stroke="#7db06b" stroke-width="1.45" fill="none" stroke-linejoin="round"/><text x="701.00" y="952.05" font-size="13.8" text-anchor="end" textLength="41.86" lengthAdjust="spacingAndGlyphs" stroke="#d8d9da" stroke-width="0.45">250 kB</text><text x="701.00" y="1008.50" font-size="13.8" text-anchor="end" textLength="41.86" lengthAdjust="spacingAndGlyphs" stroke="#d8d9da" stroke-width="0.45">200 kB</text><text x="701.00" y="1064.95" font-size="13.8" text-anchor="end" textLength="41.86" lengthAdjust="spacingAndGlyphs" stroke="#d8d9da" stroke-width="0.45">150 kB</text><text x="701.00" y="1121.40" font-size="13.8" text-anchor="end" textLength="41.86" lengthAdjust="spacingAndGlyphs" stroke="#d8d9da" stroke-width="0.45">100 kB</text><text x="701.00" y="1177.85" font-size="13.8" text-anchor="end" textLength="34.05" lengthAdjust="spacingAndGlyphs" stroke="#d8d9da" stroke-width="0.45">50 kB</text><text x="709.30" y="1194.55" font-size="13.8" text-anchor="middle" textLength="33.89" lengthAdjust="spacingAndGlyphs" stroke="#d8d9da" stroke-width="0.45">12:50</text><text x="781.00" y="1194.55" font-size="13.8" text-anchor="middle" textLength="33.89" lengthAdjust="spacingAndGlyphs" stroke="#d8d9da" stroke-width="0.45">12:52</text><text x="852.70" y="1194.55" font-size="13.8" text-anchor="middle" textLength="33.89" lengthAdjust="spacingAndGlyphs" stroke="#d8d9da" stroke-width="0.45">12:54</text><text x="924.40" y="1194.55" font-size="13.8" text-anchor="middle" textLength="33.89" lengthAdjust="spacingAndGlyphs" stroke="#d8d9da" stroke-width="0.45">12:56</text><text x="996.10" y="1194.55" font-size="13.8" text-anchor="middle" textLength="33.89" lengthAdjust="spacingAndGlyphs" stroke="#d8d9da" stroke-width="0.45">12:58</text><text x="1067.80" y="1194.55" font-size="13.8" text-anchor="middle" textLength="33.89" lengthAdjust="spacingAndGlyphs" stroke="#d8d9da" stroke-width="0.45">13:00</text><text x="1139.50" y="1194.55" font-size="13.8" text-anchor="middle" textLength="33.89" lengthAdjust="spacingAndGlyphs" stroke="#d8d9da" stroke-width="0.45">13:02</text><text x="1211.20" y="1194.55" font-size="13.8" text-anchor="middle" textLength="33.89" lengthAdjust="spacingAndGlyphs" stroke="#d8d9da" stroke-width="0.45">13:04</text><rect x="670.00" y="1217.10" width="14.9" height="4" rx="1.2" fill="#84b972"/><text x="690.00" y="1224.60" font-size="13.6" textLength="94.50" lengthAdjust="spacingAndGlyphs" stroke="#d8d9da" stroke-width="0.45">localhost_9200</text></svg></div>
<div class="panel" style="left:1286px;top:896px;width:623px;height:344px"><svg width="623" height="344" viewBox="1286 896 623 344"><text x="1597.10" y="915.80" font-size="15.9" text-anchor="middle" textLength="142.00" lengthAdjust="spacingAndGlyphs" font-weight="700">Traffic permissions</text><path d="M1322.40 1049.11 L1331.76 1015.24 L1341.11 1105.56 L1350.47 1015.24 L1359.83 1015.24 L1369.18 1015.24 L1378.54 1003.95 L1387.89 1015.24 L1397.25 1026.53 L1406.61 1015.24 L1415.96 1037.82 L1425.32 1003.95 L1434.68 970.08 L1444.03 992.66 L1453.39 1026.53 L1462.74 1049.11 L1472.10 970.08 L1481.46 1015.24 L1490.81 1015.24 L1500.17 1015.24 L1509.53 1037.82 L1518.88 1015.24 L1528.24 1049.11 L1537.59 1015.24 L1546.95 1003.95 L1556.31 981.37 L1565.66 1015.24 L1575.02 1015.24 L1584.38 1037.82 L1593.73 1049.11 L1603.09 1037.82 L1612.44 1015.24 L1621.80 1049.11 L1631.16 1003.95 L1640.51 981.37 L1649.87 1015.24 L1659.23 970.08 L1668.58 958.79 L1677.94 1026.53 L1687.29 1015.24 L1696.65 1003.95 L1706.01 1037.82 L1715.36 981.37 L1724.72 1015.24 L1734.08 1026.53 L1743.43 1015.24 L1752.79 1049.11 L1762.14 1015.24 L1771.50 1037.82 L1780.86 1049.11 L1790.21 981.37 L1799.57 1015.24 L1808.93 1082.98 L1818.28 1015.24 L1827.64 1094.27 L1836.99 1015.24 L1846.35 981.37 L1855.71 1003.95 L1865.06 1003.95 L1874.42 1015.24 L1874.42 1173.30 L1322.40 1173.30z" fill="#99ad6a" fill-opacity="0.1"/><path d="M1321.20 947.50H1882.80M1321.20 1003.95H1882.80M1321.20 1060.40H1882.80M1321.20 1116.85H1882.80M1321.20 1173.30H1882.80M1322.40 947.00V1173.80M1397.25 947.00V1173.80M1472.10 947.00V1173.80M1546.95 947.00V1173.80M1621.80 947.00V1173.80M1696.65 947.00V1173.80M1771.50 947.00V1173.80M1846.35 947.00V1173.80" stroke="#c8c8c8" stroke-opacity="0.24" stroke-width="1.3" fill="none"/><path d="M1322.40 1049.11 L1331.76 1015.24 L1341.11 1105.56 L1350.47 1015.24 L1359.83 1015.24 L1369.18 1015.24 L1378.54 1003.95 L1387.89 1015.24 L1397.25 1026.53 L1406.61 1015.24 L1415.96 1037.82 L1425.32 1003.95 L1434.68 970.08 L1444.03 992.66 L1453.39 1026.53 L1462.74 1049.11 L1472.10 970.08 L1481.46 1015.24 L1490.81 1015.24 L1500.17 1015.24 L1509.53 1037.82 L1518.88 1015.24 L1528.24 1049.11 L1537.59 1015.24 L1546.95 1003.95 L1556.31 981.37 L1565.66 1015.24 L1575.02 1015.24 L1584.38 1037.82 L1593.73 1049.11 L1603.09 1037.82 L1612.44 1015.24 L1621.80 1049.11 L1631.16 1003.95 L1640.51 981.37 L1649.87 1015.24 L1659.23 970.08 L1668.58 958.79 L1677.94 1026.53 L1687.29 1015.24 L1696.65 1003.95 L1706.01 1037.82 L1715.36 981.37 L1724.72 1015.24 L1734.08 1026.53 L1743.43 1015.24 L1752.79 1049.11 L1762.14 1015.24 L1771.50 1037.82 L1780.86 1049.11 L1790.21 981.37 L1799.57 1015.24 L1808.93 1082.98 L1818.28 1015.24 L1827.64 1094.27 L1836.99 1015.24 L1846.35 981.37 L1855.71 1003.95 L1865.06 1003.95 L1874.42 1015.24" stroke="#7db06b" stroke-width="1.45" fill="none" stroke-linejoin="round"/><path d="M1321.40 1172.80 L1874.42 1172.80" stroke="#ef843c" stroke-width="1.6" fill="none" stroke-linejoin="round"/><text x="1314.70" y="952.05" font-size="13.8" text-anchor="end" textLength="18.57" lengthAdjust="spacingAndGlyphs" stroke="#d8d9da" stroke-width="0.45">4.0</text><text x="1314.70" y="1008.50" font-size="13.8" text-anchor="end" textLength="18.57" lengthAdjust="spacingAndGlyphs" stroke="#d8d9da" stroke-width="0.45">3.0</text><text x="1314.70" y="1064.95" font-size="13.8" text-anchor="end" textLength="18.57" lengthAdjust="spacingAndGlyphs" stroke="#d8d9da" stroke-width="0.45">2.0</text><text x="1314.70" y="1121.40" font-size="13.8" text-anchor="end" textLength="18.57" lengthAdjust="spacingAndGlyphs" stroke="#d8d9da" stroke-width="0.45">1.0</text><text x="1314.70" y="1177.85" font-size="13.8" text-anchor="end" textLength="7.11" lengthAdjust="spacingAndGlyphs" stroke="#d8d9da" stroke-width="0.45">0</text><text x="1322.40" y="1194.55" font-size="13.8" text-anchor="middle" textLength="33.89" lengthAdjust="spacingAndGlyphs" stroke="#d8d9da" stroke-width="0.45">12:50</text><text x="1397.25" y="1194.55" font-size="13.8" text-anchor="middle" textLength="33.89" lengthAdjust="spacingAndGlyphs" stroke="#d8d9da" stroke-width="0.45">12:52</text><text x="1472.10" y="1194.55" font-size="13.8" text-anchor="middle" textLength="33.89" lengthAdjust="spacingAndGlyphs" stroke="#d8d9da" stroke-width="0.45">12:54</text><text x="1546.95" y="1194.55" font-size="13.8" text-anchor="middle" textLength="33.89" lengthAdjust="spacingAndGlyphs" stroke="#d8d9da" stroke-width="0.45">12:56</text><text x="1621.80" y="1194.55" font-size="13.8" text-anchor="middle" textLength="33.89" lengthAdjust="spacingAndGlyphs" stroke="#d8d9da" stroke-width="0.45">12:58</text><text x="1696.65" y="1194.55" font-size="13.8" text-anchor="middle" textLength="33.89" lengthAdjust="spacingAndGlyphs" stroke="#d8d9da" stroke-width="0.45">13:00</text><text x="1771.50" y="1194.55" font-size="13.8" text-anchor="middle" textLength="33.89" lengthAdjust="spacingAndGlyphs" stroke="#d8d9da" stroke-width="0.45">13:02</text><text x="1846.35" y="1194.55" font-size="13.8" text-anchor="middle" textLength="33.89" lengthAdjust="spacingAndGlyphs" stroke="#d8d9da" stroke-width="0.45">13:04</text><rect x="1306.70" y="1217.10" width="14.9" height="4" rx="1.2" fill="#84b972"/><text x="1326.70" y="1224.60" font-size="13.6" textLength="260.00" lengthAdjust="spacingAndGlyphs" stroke="#d8d9da" stroke-width="0.45">Allowed - inbound_192_168_33_50_19200</text></svg></div>
<div class="panel" style="left:13px;top:1253px;width:1896px;height:345px"><svg width="1896" height="345" viewBox="13 1253 1896 345"><text x="960.50" y="1273.00" font-size="15.9" text-anchor="middle" textLength="207.50" lengthAdjust="spacingAndGlyphs" font-weight="700">Connection/Requests errors</text><path d="M52.60 1305.00H1817.00M52.60 1369.58H1817.00M52.60 1434.15H1817.00M52.60 1498.72H1817.00M52.60 1563.30H1817.00M57.60 1304.50V1563.80M175.15 1304.50V1563.80M292.70 1304.50V1563.80M410.25 1304.50V1563.80M527.80 1304.50V1563.80M645.35 1304.50V1563.80M762.90 1304.50V1563.80M880.45 1304.50V1563.80M998.00 1304.50V1563.80M1115.55 1304.50V1563.80M1233.10 1304.50V1563.80M1350.65 1304.50V1563.80M1468.20 1304.50V1563.80M1585.75 1304.50V1563.80M1703.30 1304.50V1563.80" stroke="#c8c8c8" stroke-opacity="0.24" stroke-width="1.3" fill="none"/><path d="M52.00 1433.30 L1792.50 1433.30" stroke="#4b85c4" stroke-width="1.15" fill="none" stroke-linejoin="round"/><text x="45.50" y="1309.55" font-size="13.8" text-anchor="end" textLength="18.57" lengthAdjust="spacingAndGlyphs" stroke="#d8d9da" stroke-width="0.45">1.0</text><text x="45.50" y="1374.12" font-size="13.8" text-anchor="end" textLength="18.57" lengthAdjust="spacingAndGlyphs" stroke="#d8d9da" stroke-width="0.45">0.5</text><text x="45.50" y="1438.70" font-size="13.8" text-anchor="end" textLength="7.11" lengthAdjust="spacingAndGlyphs" stroke="#d8d9da" stroke-width="0.45">0</text><text x="45.50" y="1503.27" font-size="13.8" text-anchor="end" textLength="22.40" lengthAdjust="spacingAndGlyphs" stroke="#d8d9da" stroke-width="0.45">-0.5</text><text x="45.50" y="1566.35" font-size="13.8" text-anchor="end" textLength="22.40" lengthAdjust="spacingAndGlyphs" stroke="#d8d9da" stroke-width="0.45">-1.0</text><text x="57.60" y="1581.65" font-size="13.8" text-anchor="middle" textLength="33.89" lengthAdjust="spacingAndGlyphs" stroke="#d8d9da" stroke-width="0.45">12:50</text><text x="175.15" y="1581.65" font-size="13.8" text-anchor="middle" textLength="33.89" lengthAdjust="spacingAndGlyphs" stroke="#d8d9da" stroke-width="0.45">12:51</text><text x="292.70" y="1581.65" font-size="13.8" text-anchor="middle" textLength="33.89" lengthAdjust="spacingAndGlyphs" stroke="#d8d9da" stroke-width="0.45">12:52</text><text x="410.25" y="1581.65" font-size="13.8" text-anchor="middle" textLength="33.89" lengthAdjust="spacingAndGlyphs" stroke="#d8d9da" stroke-width="0.45">12:53</text><text x="527.80" y="1581.65" font-size="13.8" text-anchor="middle" textLength="33.89" lengthAdjust="spacingAndGlyphs" stroke="#d8d9da" stroke-width="0.45">12:54</text><text x="645.35" y="1581.65" font-size="13.8" text-anchor="middle" textLength="33.89" lengthAdjust="spacingAndGlyphs" stroke="#d8d9da" stroke-width="0.45">12:55</text><text x="762.90" y="1581.65" font-size="13.8" text-anchor="middle" textLength="33.89" lengthAdjust="spacingAndGlyphs" stroke="#d8d9da" stroke-width="0.45">12:56</text><text x="880.45" y="1581.65" font-size="13.8" text-anchor="middle" textLength="33.89" lengthAdjust="spacingAndGlyphs" stroke="#d8d9da" stroke-width="0.45">12:57</text><text x="998.00" y="1581.65" font-size="13.8" text-anchor="middle" textLength="33.89" lengthAdjust="spacingAndGlyphs" stroke="#d8d9da" stroke-width="0.45">12:58</text><text x="1115.55" y="1581.65" font-size="13.8" text-anchor="middle" textLength="33.89" lengthAdjust="spacingAndGlyphs" stroke="#d8d9da" stroke-width="0.45">12:59</text><text x="1233.10" y="1581.65" font-size="13.8" text-anchor="middle" textLength="33.89" lengthAdjust="spacingAndGlyphs" stroke="#d8d9da" stroke-width="0.45">13:00</text><text x="1350.65" y="1581.65" font-size="13.8" text-anchor="middle" textLength="33.89" lengthAdjust="spacingAndGlyphs" stroke="#d8d9da" stroke-width="0.45">13:01</text><text x="1468.20" y="1581.65" font-size="13.8" text-anchor="middle" textLength="33.89" lengthAdjust="spacingAndGlyphs" stroke="#d8d9da" stroke-width="0.45">13:02</text><text x="1585.75" y="1581.65" font-size="13.8" text-anchor="middle" textLength="33.89" lengthAdjust="spacingAndGlyphs" stroke="#d8d9da" stroke-width="0.45">13:03</text><text x="1703.30" y="1581.65" font-size="13.8" text-anchor="middle" textLength="33.89" lengthAdjust="spacingAndGlyphs" stroke="#d8d9da" stroke-width="0.45">13:04</text><text x="1882.60" y="1316.00" font-size="14" text-anchor="end" textLength="28.40" lengthAdjust="spacingAndGlyphs" fill="#52bae8" font-weight="700">total</text></svg></div>
<svg class="abs" style="left:1364px;top:178px" width="36" height="36" viewBox="1364 178 36 36"><path d="M1364.7 178.8h32.2L1364.7 210.60000000000002z" fill="#2f2f33"/><text x="1370.60" y="195.00" font-size="15" fill="#8e8e8e" font-weight="700" stroke="#8e8e8e" stroke-width="0.5" font-family='"Liberation Serif", serif'>i</text></svg>
<svg class="abs" style="left:1285px;top:893px" width="36" height="36" viewBox="1285 893 36 36"><path d="M1285.7 893.8h32.2L1285.7 925.5999999999999z" fill="#2f2f33"/><text x="1291.60" y="910.00" font-size="15" fill="#8e8e8e" font-weight="700" stroke="#8e8e8e" stroke-width="0.5" font-family='"Liberation Serif", serif'>i</text></svg>
</body></html>
